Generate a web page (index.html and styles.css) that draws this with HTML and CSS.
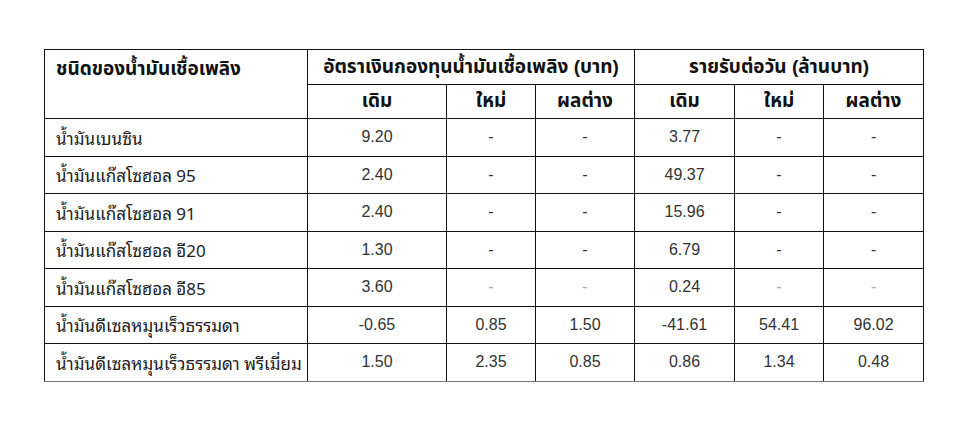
FILE: index.html
```html
<!DOCTYPE html>
<html lang="th">
<head>
<meta charset="utf-8">
<link rel="stylesheet" href="styles.css">
</head>
<body>
<div class="page">
<table class="fund">
<colgroup>
<col class="c-name"><col class="c-a1"><col class="c-a2"><col class="c-a3"><col class="c-b1"><col class="c-b2"><col class="c-b3">
</colgroup>
<thead>
<tr class="h1">
<th rowspan="2" class="name-h">ชนิดของน้ำมันเชื้อเพลิง</th>
<th colspan="3">อัตราเงินกองทุนน้ำมันเชื้อเพลิง (บาท)</th>
<th colspan="3">รายรับต่อวัน (ล้านบาท)</th>
</tr>
<tr class="h2">
<th>เดิม</th><th>ใหม่</th><th>ผลต่าง</th>
<th>เดิม</th><th>ใหม่</th><th>ผลต่าง</th>
</tr>
</thead>
<tbody>
<tr><td class="name">น้ำมันเบนซิน</td><td>9.20</td><td>-</td><td>-</td><td>3.77</td><td>-</td><td>-</td></tr>
<tr><td class="name">น้ำมันแก๊สโซฮอล 95</td><td>2.40</td><td>-</td><td>-</td><td>49.37</td><td>-</td><td>-</td></tr>
<tr><td class="name">น้ำมันแก๊สโซฮอล 91</td><td>2.40</td><td>-</td><td>-</td><td>15.96</td><td>-</td><td>-</td></tr>
<tr><td class="name">น้ำมันแก๊สโซฮอล อี20</td><td>1.30</td><td>-</td><td>-</td><td>6.79</td><td>-</td><td>-</td></tr>
<tr><td class="name">น้ำมันแก๊สโซฮอล อี85</td><td>3.60</td><td class="light">-</td><td class="light">-</td><td>0.24</td><td class="light">-</td><td class="light">-</td></tr>
<tr><td class="name">น้ำมันดีเซลหมุนเร็วธรรมดา</td><td>-0.65</td><td>0.85</td><td>1.50</td><td>-41.61</td><td>54.41</td><td>96.02</td></tr>
<tr class="last"><td class="name">น้ำมันดีเซลหมุนเร็วธรรมดา พรีเมี่ยม</td><td>1.50</td><td>2.35</td><td>0.85</td><td>0.86</td><td>1.34</td><td>0.48</td></tr>
</tbody>
</table>
</div>
</body>
</html>
```
FILE: styles.css
```css
html, body {
  margin: 0;
  padding: 0;
  background: #fff;
}
.page {
  padding: 49px 0 0 44px;
}
.fund {
  border-collapse: collapse;
  table-layout: fixed;
  width: 879px;
  font-family: "Liberation Sans", "Noto Sans Thai", "Noto Sans", sans-serif;
  color: #333;
}
.c-name { width: 263px; }
.c-a1 { width: 139px; }
.c-a2 { width: 89px; }
.c-a3 { width: 99px; }
.c-b1 { width: 100px; }
.c-b2 { width: 89px; }
.c-b3 { width: 100px; }
.fund th, .fund td {
  border: 1px solid #111;
  padding: 0;
  text-align: center;
  vertical-align: middle;
}
.fund th {
  font-weight: bold;
  font-size: 19px;
  color: #111;
}
.h1 { height: 35px; }
.h2 { height: 34px; }
.fund th.name-h {
  text-align: left;
  vertical-align: top;
  padding: 5px 0 0 11px;
}
.fund td {
  font-size: 16px;
  height: 36.5px;
}
.fund td.name {
  text-align: left;
  padding-left: 11px;
  font-family: "Noto Sans Thai Looped", "Loma", "Garuda", "Norasi", "Noto Serif Thai", "Liberation Sans", sans-serif;
  font-size: 17px;
  color: #222;
}
.fund td.light {
  color: #aaa;
}
.last td {
  border-bottom-color: #777;
}
```
